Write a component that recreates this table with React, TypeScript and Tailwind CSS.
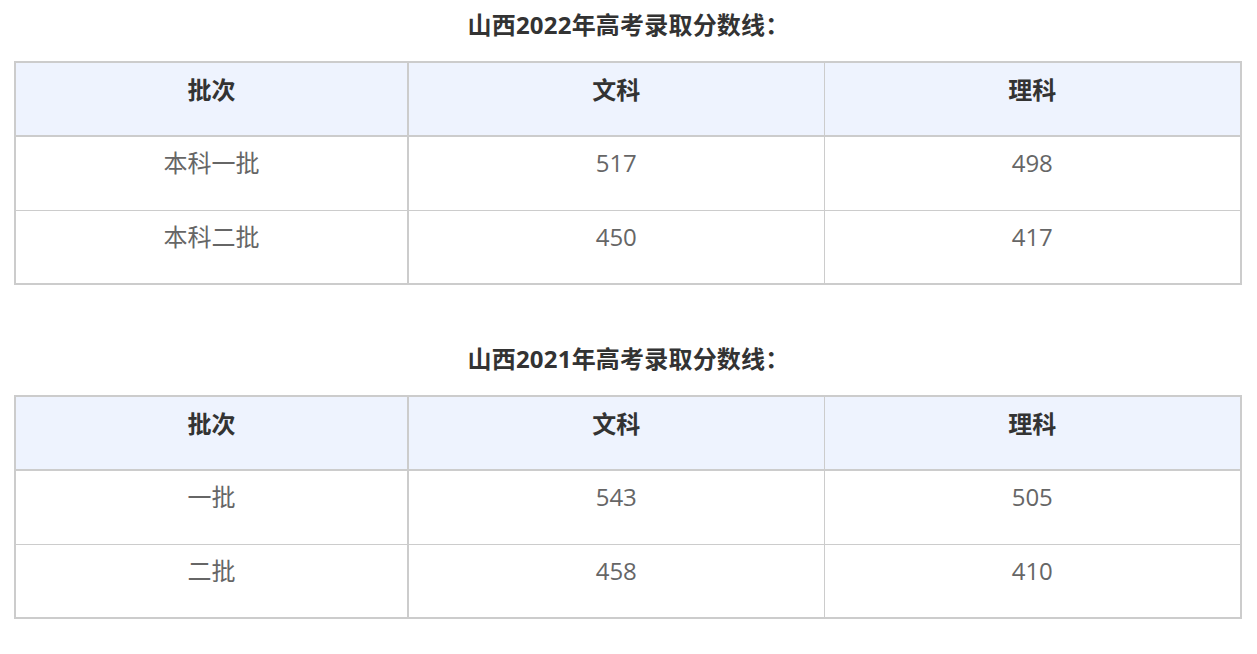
import React from "react";

type Row = [string, string, string];

const data: { title: string; rows: Row[] }[] = [
  {
    title: "山西2022年高考录取分数线：",
    rows: [
      ["本科一批", "517", "498"],
      ["本科二批", "450", "417"],
    ],
  },
  {
    title: "山西2021年高考录取分数线：",
    rows: [
      ["一批", "543", "505"],
      ["二批", "458", "410"],
    ],
  },
];

function ScoreTable({ title, rows }: { title: string; rows: Row[] }) {
  return (
    <section>
      <h2 className="h-[50px] flex items-center justify-center text-[24px] font-bold text-[#333] tracking-[0.2px]">
        {title}
      </h2>
      <table className="mt-[11px] w-[1226px] table-fixed border-collapse border-2 border-[#ccc]">
        <colgroup>
          <col className="w-[393px]" />
          <col className="w-[416px]" />
          <col className="w-[417px]" />
        </colgroup>
        <thead>
          <tr className="h-[74px] bg-[#eef3fe]">
            <th className="border-b-2 border-r-2 border-[#ccc] text-[24px] font-bold text-[#333] pb-[18px]">批次</th>
            <th className="border-b-2 border-r border-[#ccc] text-[24px] font-bold text-[#333] pb-[18px]">文科</th>
            <th className="border-b-2 border-[#ccc] text-[24px] font-bold text-[#333] pb-[18px]">理科</th>
          </tr>
        </thead>
        <tbody>
          {rows.map((r, i) => (
            <tr key={i} className="h-[74px]">
              <td className={`border-r-2 border-[#ccc] text-center text-[24px] text-[#666] pb-[20px] ${i > 0 ? "border-t" : ""}`}>{r[0]}</td>
              <td className={`border-r border-[#ccc] text-center text-[24px] text-[#666] pb-[20px] ${i > 0 ? "border-t" : ""}`}>{r[1]}</td>
              <td className={`border-[#ccc] text-center text-[24px] text-[#666] pb-[20px] ${i > 0 ? "border-t" : ""}`}>{r[2]}</td>
            </tr>
          ))}
        </tbody>
      </table>
    </section>
  );
}

export default function App() {
  return (
    <div
      className="w-[1257px] h-[654px] bg-white px-[14px]"
      style={{ fontFamily: '"Open Sans", "Noto Sans CJK SC", sans-serif' }}
    >
      <ScoreTable {...data[0]} />
      <div className="h-[49px]" />
      <ScoreTable {...data[1]} />
    </div>
  );
}
